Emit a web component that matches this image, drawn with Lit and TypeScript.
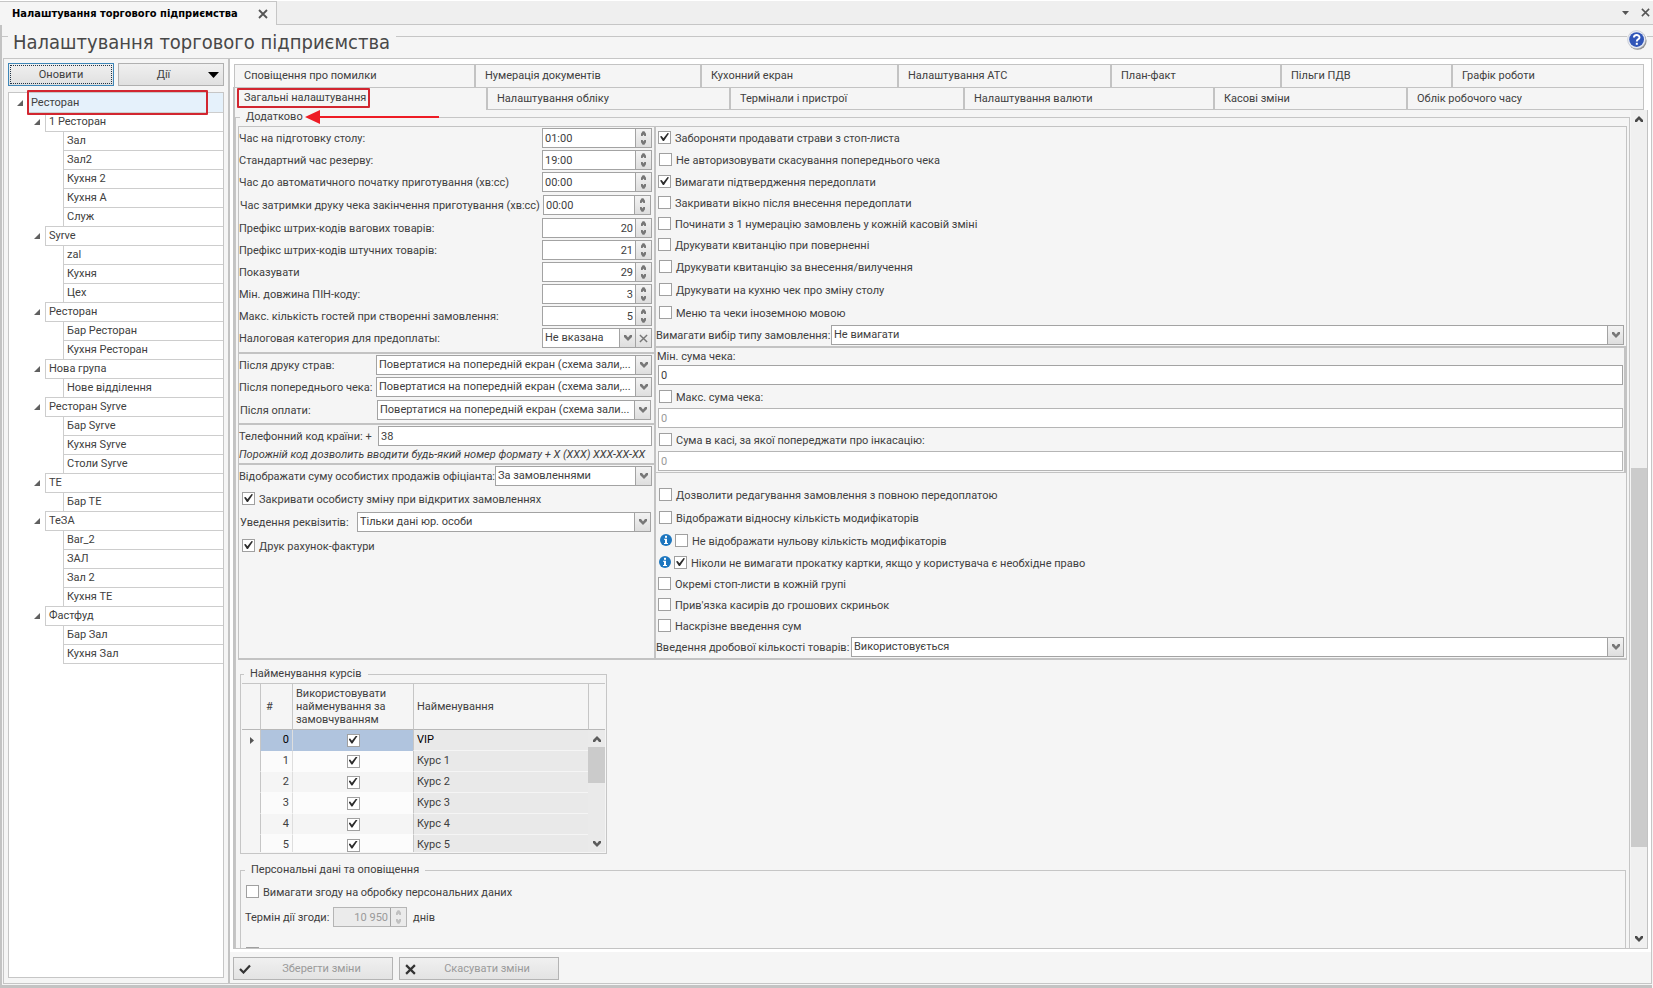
import { LitElement, html, css, svg, nothing } from "lit";
import { customElement, property } from "lit/decorators.js";
import { classMap } from "lit/directives/class-map.js";
import { styleMap } from "lit/directives/style-map.js";

const chevronDown = svg`<svg class="chev" viewBox="0 0 8 6" width="8" height="6"><path d="M0 0h2l2 2.4L6 0h2v2L4 6 0 2z" fill="currentColor"/></svg>`;
const chevronUp = svg`<svg class="chev" viewBox="0 0 8 6" width="8" height="6"><path d="M0 6h2l2-2.4L6 6h2V4L4 0 0 4z" fill="currentColor"/></svg>`;
const miniUp = svg`<svg viewBox="0 0 5 5" width="5" height="5"><path d="M0 5h1.6l.9-1.6.9 1.6H5V2.8L3.4.2H1.6L0 2.8z" fill="currentColor"/></svg>`;
const miniDown = svg`<svg viewBox="0 0 5 5" width="5" height="5"><path d="M0 0h1.6l.9 1.6L3.4 0H5v2.2L3.4 4.8H1.6L0 2.2z" fill="currentColor"/></svg>`;
const cross = (size: number, w: number) => svg`<svg viewBox="0 0 10 10" width=${size} height=${size}><path d="M1 1l8 8M9 1l-8 8" stroke="currentColor" stroke-width=${w} fill="none"/></svg>`;
const infoIcon = svg`<svg viewBox="0 0 12 12" width="12" height="12" aria-hidden="true"><circle cx="6" cy="6" r="6" fill="#1c76bf"/><rect x="5" y="1.8" width="2" height="2" fill="#fff"/><path d="M4 4.8h3V9h1v1H4V9h1V5.8H4z" fill="#fff"/></svg>`;

const base = css`
  * { box-sizing: border-box; }
  button, input, select { font: inherit; color: inherit; margin: 0; border-radius: 0; }
  button { padding: 0; }
  svg { display: block; }
  .check {
    appearance: none; flex: none; width: 13px; height: 13px;
    border: 1px solid #a0a0a0; background: #fff;
  }
  .check:checked::after {
    content: ""; display: block; width: 9px; height: 8px; margin: 1px;
    background: #2d2d2d;
    clip-path: polygon(0 45%, 18% 38%, 38% 66%, 84% 0, 100% 6%, 44% 100%, 32% 100%);
  }
`;

@customElement("tick-row")
class TickRow extends LitElement {
  @property() text = "";
  @property({ type: Boolean }) on = false;
  @property({ type: Boolean }) inset = false;
  @property({ type: Boolean }) info = false;
  static styles = [base, css`
    :host { display: block; }
    .row { display: flex; align-items: center; gap: 3px; height: 21px; padding-left: 2px; }
    .row.inset { height: 23px; padding-left: 3px; }
    .row > svg { flex: none; margin: 0 0 2px 1px; }
    label { padding: 2px 0 0 1px; white-space: nowrap; }
  `];
  render() {
    return html`<div class=${classMap({ row: true, inset: this.inset })}>
      ${this.info ? infoIcon : nothing}
      <input class="check" type="checkbox" id="c" .checked=${this.on}><label for="c">${this.text}</label>
    </div>`;
  }
}

@customElement("field-row")
class FieldRow extends LitElement {
  @property() text = "";
  @property() value = "";
  @property() kind: "text" | "time" | "number" | "select" | "clearable" = "text";
  @property({ type: Number }) lead = 0;
  @property({ type: Boolean }) inset = false;
  @property({ type: Boolean }) off = false;
  @property() unit = "";
  static styles = [base, css`
    :host { display: block; }
    .row { display: flex; padding: 1px 2px 1px 0; height: 22px; align-items: center; }
    .row.inset { padding: 2px 3px 2px 1px; height: 24px; }
    label { flex: none; padding-top: 2px; white-space: nowrap; }
    .box { flex: 1; min-width: 0; height: 20px; display: flex; border: 1px solid #a3a3a3; background: #fff; }
    .entry {
      flex: 1; min-width: 0; width: 0; height: 18px; border: 0; padding: 0 2px; background: none;
      appearance: none; outline: 0;
    }
    .number { text-align: right; }
    .side {
      flex: none; width: 16px; border: 0; border-left: 1px solid #a3a3a3; color: #777;
      background: linear-gradient(#f3f3f3, #dedede); display: flex; flex-direction: column;
      align-items: center; justify-content: center;
    }
    .spin { flex: 1; width: 100%; border: 0; background: none; color: inherit; display: grid; place-items: center; }
    .off .box { border-color: #b5b5b5; }
    .off .entry { color: #9a9a9a; }
    .compact .box { flex: none; width: 74px; background: #ebebeb; }
    .compact .side { background: #ebebeb; color: #c0c0c0; }
    .unit { padding: 2px 0 0 6px; }
  `];
  render() {
    const k = this.kind;
    const isSelect = k === "select" || k === "clearable";
    const isSpin = k === "time" || k === "number";
    return html`<div class=${classMap({ row: true, inset: this.inset, off: this.off, compact: !!this.unit })}>
      ${this.text ? html`<label for="f" style=${styleMap({ width: this.lead ? this.lead + "px" : "auto" })}>${this.text}</label>` : nothing}
      <div class="box">
        ${isSelect
          ? html`<select class="entry" id="f"><option>${this.value}</option></select><span class="side">${chevronDown}</span>`
          : html`<input class=${classMap({ entry: true, number: k === "number" })} id="f" .value=${this.value} ?disabled=${this.off} aria-label=${this.text || "Сума"}>`}
        ${isSpin ? html`<span class="side">
          <button class="spin" aria-label="Більше" ?disabled=${this.off}>${miniUp}</button>
          <button class="spin" aria-label="Менше" ?disabled=${this.off}>${miniDown}</button>
        </span>` : nothing}
        ${k === "clearable" ? html`<button class="side" aria-label="Очистити">${cross(9, 1.6)}</button>` : nothing}
      </div>
      ${this.unit ? html`<span class="unit">${this.unit}</span>` : nothing}
    </div>`;
  }
}

type Node = [level: number, name: string];
const tree: Node[] = [
  [0, "Ресторан"], [1, "1 Ресторан"], [2, "Зал"], [2, "Зал2"], [2, "Кухня 2"], [2, "Кухня А"], [2, "Служ"],
  [1, "Syrve"], [2, "zal"], [2, "Кухня"], [2, "Цех"],
  [1, "Ресторан"], [2, "Бар Ресторан"], [2, "Кухня Ресторан"],
  [1, "Нова група"], [2, "Нове відділення"],
  [1, "Ресторан Syrve"], [2, "Бар Syrve"], [2, "Кухня Syrve"], [2, "Столи Syrve"],
  [1, "ТЕ"], [2, "Бар ТЕ"],
  [1, "ТеЗА"], [2, "Bar_2"], [2, "ЗАЛ"], [2, "Зал 2"], [2, "Кухня ТЕ"],
  [1, "Фастфуд"], [2, "Бар Зал"], [2, "Кухня Зал"],
];

const upperTabs: [string, number][] = [
  ["Сповіщення про помилки", 240], ["Нумерація документів", 226], ["Кухонний екран", 197],
  ["Налаштування АТС", 213], ["План-факт", 170], ["Пільги ПДВ", 171], ["Графік роботи", 193],
];
const lowerTabs: [string, number][] = [
  ["Загальні налаштування", 253], ["Налаштування обліку", 243], ["Термінали і пристрої", 234],
  ["Налаштування валюти", 250], ["Касові зміни", 193], ["Облік робочого часу", 238],
];
const columns = (tabs: [string, number][]) => ({ gridTemplateColumns: tabs.map(([, n]) => n + "fr").join(" ") });

@customElement("app-root")
class AppRoot extends LitElement {
  static styles = [base, css`
    :host {
      display: flex; flex-direction: column; height: 100vh; overflow: hidden;
      background: #f5f5f5; color: #404040; font: 11px/14px Roboto, "Liberation Sans", sans-serif;
    }
    .strip { flex: none; display: flex; height: 25px; padding-top: 1px; background: #fff; }
    .doc {
      display: flex; align-items: center; gap: 14px; width: 277px; padding-left: 12px;
      border: 1px solid #c6c6c6; border-width: 1px 1px 0 0; background: #f5f5f5;
      font: bold 11px/22px "DejaVu Sans Condensed", "DejaVu Sans", sans-serif; color: #000; white-space: nowrap;
    }
    .plain { border: 0; background: none; color: #555; display: grid; place-items: center; }
    .doc .plain { margin-left: auto; margin-right: 8px; }
    .strip-rest {
      flex: 1; display: flex; justify-content: flex-end; align-items: center; gap: 12px;
      padding-right: 3px; background: #efefef; border-bottom: 1px solid #c6c6c6;
    }
    .head { flex: none; display: flex; height: 33px; border-left: 2px solid #c3c3c3; }
    .rule { flex: none; width: 6px; height: 1px; margin-top: 11px; background: #c6c6c6; }
    .rule.long { flex: 1; width: auto; }
    h1 {
      margin: 0; padding: 1px 6px 0 5px; font: 20px/33px "DejaVu Sans Condensed", "DejaVu Sans", sans-serif;
      white-space: nowrap; color: #484848;
    }
    .help { border: 0; background: none; margin-top: 5px; height: 20px; }

    .frame {
      flex: 1; min-height: 0; display: flex; margin: 0 1px 0 0; border-left: 2px solid #c3c3c3;
      padding-left: 1px; border-bottom: 3px solid #c3c3c3;
    }
    .work { flex: 1; min-width: 0; display: flex; border: 1px solid #c6c6c6; margin-bottom: 1px; }
    .nav { flex: none; width: 226px; display: flex; flex-direction: column; padding: 4px 4px 5px 4px; border-right: 2px solid #c3c3c3; }
    .pair { display: flex; gap: 4px; margin-bottom: 6px; }
    .btn {
      flex: 1; height: 23px; border: 1px solid #b0b0b0; background: linear-gradient(#f0f0f0, #e0e0e0);
      display: flex; align-items: center; justify-content: center; padding-top: 1px;
    }
    .btn.focus { border-color: #3f87b8; outline: 1px dotted #234; outline-offset: -3px; }
    .btn .grow { flex: 1; text-align: center; }
    .btn svg { margin-right: 4px; }
    .tree { flex: 1; min-height: 0; margin: 0; padding: 0; list-style: none; background: #fff; border: 1px solid #c6c6c6; }
    .node { position: relative; display: flex; height: 20px; margin-bottom: -1px; }
    .twist { flex: none; width: 19px; display: flex; justify-content: flex-end; align-items: center; padding-right: 5px; }
    .level1 .twist { width: 36px; }
    .level2 .twist { width: 54px; }
    .name { flex: 1; border: 1px solid #cdcdcd; border-right: 0; padding: 0 3px; line-height: 18px; }
    .level0 .name { background: #e5f1fb; border-width: 0 0 1px; line-height: 20px; }
    .mark { position: absolute; border: 2px solid #d22630; pointer-events: none; border-radius: 1px; }
    .node .mark { left: 18px; right: 15px; top: -3px; height: 25px; z-index: 1; }

    .main { flex: 1; min-width: 0; display: flex; flex-direction: column; }
    .stage { flex: 1; min-height: 0; display: flex; flex-direction: column; padding: 5px 3px 3px; background: #fff; }
    .tabs { flex: none; display: grid; margin: 0 4px 0 1px; position: relative; }
    .tab {
      height: 23px; border: 1px solid #c3c3c3; border-width: 1px 0 0 2px; background: #f5f5f5;
      text-align: left; padding-left: 9px; position: relative;
    }
    .tab:first-child { border-left-width: 1px; }
    .tab:last-child { border-right-width: 1px; }
    .lower { margin-left: 0; }
    .lower .tab { border-bottom-width: 1px; }
    .lower .active { border-bottom: 0; border-left: 2px solid #c3c3c3; padding-bottom: 3px; }
    .active .mark { left: 2px; top: 0; width: 133px; height: 20px; }
    .page {
      flex: 1; min-height: 0; display: flex; overflow: hidden; border: 1px solid #c3c3c3;
      border-top: 0; border-left-width: 2px; background: #f5f5f5;
    }
    .content { flex: 1; min-width: 0; }
    fieldset { margin: 0; min-width: 0; border: 1px solid #c6c6c6; padding: 2px 2px 20px 2px; }
    legend { padding: 0 6px; margin-left: 2px; height: 14px; position: relative; }
    .arrow { position: absolute; left: 65px; top: 0; }
    .grid { display: grid; grid-template-columns: 417px minmax(0, 1fr); border: 1px solid #c3c3c3; border-bottom-width: 2px; }
    .left { border-right: 2px solid #c3c3c3; }
    .part { border-bottom: 2px solid #c3c3c3; padding-bottom: 1px; }
    .part.first { padding-bottom: 3px; }
    .part:last-child { border: 0; }
    .hint { font-style: italic; height: 15px; line-height: 16px; white-space: nowrap; overflow: hidden; }
    .right .sums { border: 1px solid #c3c3c3; border-top-width: 2px; border-right-width: 2px; border-left: 0; }
    .sums .cap { height: 16px; line-height: 18px; padding-left: 1px; display: block; }
    .sums field-row { padding-left: 2px; margin-right: -1px; }
    .sums tick-row { padding-left: 1px; }
    .later { padding-top: 10px; }

    .courses { width: 367px; margin: 7px 0 0 2px; padding: 2px 1px 1px 1px; }
    .window { display: flex; height: 169px; overflow: hidden; border-top: 1px solid #c6c6c6; }
    table { flex: 1; border-collapse: separate; border-spacing: 0; table-layout: fixed; }
    th { height: 46px; font-weight: normal; text-align: left; line-height: 13px; padding: 0 3px; border-bottom: 1px solid #b8b8b8; border-left: 1px solid #c6c6c6; }
    th:first-child, td:first-child { border-left: 0; width: 18px; }
    th.num { width: 32px; padding-left: 5px; }
    th.use { width: 121px; }
    td { height: 21px; padding: 0 3px; border-left: 1px solid #c6c6c6; border-bottom: 1px solid #f5f5f5; }
    td:first-child { padding: 0 0 0 8px; }
    td.num { text-align: right; background: #fbfbfb; border-bottom-color: #fbfbfb; }
    td.use { background: #fcfcfc; border-color: #fcfcfc; border-left-color: #dedede; }
    td.use .check { display: block; margin: 0 auto; }
    tr:nth-child(odd) td.num, tr:nth-child(odd) td.use { background: #f5f5f5; }
    td.title { background: #e9e9e9; }
    tr.current td { color: #000; }
    tbody tr.current td.num, tbody tr.current td.use { background: #b0c4de; border-bottom-color: #b0c4de; }
    .rail { flex: none; width: 17px; display: flex; flex-direction: column; }
    .rail .corner { height: 46px; border-left: 1px solid #c6c6c6; border-bottom: 1px solid #b8b8b8; }
    .bar { flex: 1; display: flex; flex-direction: column; background: #eaeaea; color: #5c5c5c; }
    .bar button { height: 17px; border: 0; background: none; display: grid; place-items: center; }
    .thumb { height: 36px; background: #cbcbcb; }
    .space { flex: 1; }

    .personal { margin: 9px 1px 0 2px; padding: 4px 4px 20px; }
    .personal legend { margin-left: 0; }
    .personal tick-row { margin-left: -1px; }
    .personal field-row { margin: 4px 0 15px; }
    .scroll { flex: none; width: 16px; margin: 0 0 0 1px; display: flex; flex-direction: column; background: #f0f0f0; color: #4a4a4a; }
    .scroll button { height: 18px; border: 0; background: none; display: grid; place-items: center; }
    .before { flex: 340; }
    .grip { flex: 380; background: #cbcbcb; }
    .after { flex: 83; }

    .foot { flex: none; display: flex; gap: 6px; padding: 5px 3px 3px; }
    .foot .btn { flex: none; width: 160px; color: #9a9a9a; border-color: #b4b4b4; background: linear-gradient(#f0f0f0, #e3e3e3); }
    .foot svg { margin: 0 0 0 5px; color: #333; }
  `];

  private tabRow(tabs: [string, number][], lower: boolean) {
    return html`<div class=${classMap({ tabs: true, lower })} style=${styleMap(columns(tabs))}>
      ${tabs.map(([name], i) => html`<button class=${classMap({ tab: true, active: lower && i === 0 })}>${name}${lower && i === 0 ? html`<span class="mark"></span>` : nothing}</button>`)}
    </div>`;
  }

  private nav() {
    return html`<nav class="nav">
      <div class="pair">
        <button class="btn focus">Оновити</button>
        <button class="btn"><span class="grow">Дії</span>
          <svg viewBox="0 0 11 6" width="11" height="6"><path d="M0 0h11L5.5 6z" fill="#000"/></svg></button>
      </div>
      <ul class="tree">${tree.map(([level, name]) => html`<li class="node level${level}">
        <span class="twist">${level < 2 ? svg`<svg viewBox="0 0 6 6" width="6" height="6"><path d="M6 0v6H0z" fill="#606060"/></svg>` : nothing}</span>
        <span class="name">${name}</span>${level === 0 ? html`<span class="mark"></span>` : nothing}</li>`)}</ul>
    </nav>`;
  }

  private leftColumn() {
    const back = "Повертатися на попередній екран (схема зали";
    return html`<div class="left">
      <div class="part first">
        <field-row kind="time" lead="303" text="Час на підготовку столу:" value="01:00"></field-row>
        <field-row kind="time" lead="303" text="Стандартний час резерву:" value="19:00"></field-row>
        <field-row kind="time" lead="303" text="Час до автоматичного початку приготування (хв:сс)" value="00:00"></field-row>
        <field-row kind="time" lead="303" inset text="Час затримки друку чека закінчення приготування (хв:сс)" value="00:00"></field-row>
        <field-row kind="number" lead="303" text="Префікс штрих-кодів вагових товарів:" value="20"></field-row>
        <field-row kind="number" lead="303" text="Префікс штрих-кодів штучних товарів:" value="21"></field-row>
        <field-row kind="number" lead="303" text="Показувати" value="29"></field-row>
        <field-row kind="number" lead="303" text="Мін. довжина ПІН-коду:" value="3"></field-row>
        <field-row kind="number" lead="303" text="Макс. кількість гостей при створенні замовлення:" value="5"></field-row>
        <field-row kind="clearable" lead="303" text="Налоговая категория для предоплаты:" value="Не вказана"></field-row>
      </div>
      <div class="part">
        <field-row kind="select" lead="137" text="Після друку страв:" value=${back + ",..."}></field-row>
        <field-row kind="select" lead="137" text="Після попереднього чека:" value=${back + ",..."}></field-row>
        <field-row kind="select" lead="137" inset text="Після оплати:" value=${back + "..."}></field-row>
      </div>
      <div class="part">
        <field-row lead="139" text="Телефонний код країни: +" value="38"></field-row>
        <div class="hint">Порожній код дозволить вводити будь-який номер формату + X (XXX) XXX-XX-XX</div>
      </div>
      <div class="part">
        <field-row kind="select" lead="256" text="Відображати суму особистих продажів офіціанта:" value="За замовленнями"></field-row>
        <tick-row inset on text="Закривати особисту зміну при відкритих замовленнях"></tick-row>
        <field-row kind="select" lead="117" inset text="Уведення реквізитів:" value="Тільки дані юр. особи"></field-row>
        <tick-row inset on text="Друк рахунок-фактури"></tick-row>
      </div>
    </div>`;
  }

  private rightColumn() {
    return html`<div class="right">
      <tick-row on text="Забороняти продавати страви з стоп-листа"></tick-row>
      <tick-row inset text="Не авторизовувати скасування попереднього чека"></tick-row>
      <tick-row on text="Вимагати підтвердження передоплати"></tick-row>
      <tick-row text="Закривати вікно після внесення передоплати"></tick-row>
      <tick-row text="Починати з 1 нумерацію замовлень у кожній касовій зміні"></tick-row>
      <tick-row text="Друкувати квитанцію при поверненні"></tick-row>
      <tick-row inset text="Друкувати квитанцію за внесення/вилучення"></tick-row>
      <tick-row inset text="Друкувати на кухню чек про зміну столу"></tick-row>
      <tick-row inset text="Меню та чеки іноземною мовою"></tick-row>
      <field-row kind="select" lead="175" text="Вимагати вибір типу замовлення:" value="Не вимагати"></field-row>
      <div class="sums">
        <span class="cap">Мін. сума чека:</span>
        <field-row value="0"></field-row>
        <tick-row text="Макс. сума чека:"></tick-row>
        <field-row off value="0"></field-row>
        <tick-row text="Сума в касі, за якої попереджати про інкасацію:"></tick-row>
        <field-row off value="0"></field-row>
      </div>
      <div class="later">
        <tick-row inset text="Дозволити редагування замовлення з повною передоплатою"></tick-row>
        <tick-row inset text="Відображати відносну кількість модифікаторів"></tick-row>
        <tick-row inset info text="Не відображати нульову кількість модифікаторів"></tick-row>
        <tick-row info on text="Ніколи не вимагати прокатку картки, якщо у користувача є необхідне право"></tick-row>
        <tick-row text="Окремі стоп-листи в кожній групі"></tick-row>
        <tick-row text="Прив'язка касирів до грошових скриньок"></tick-row>
        <tick-row text="Наскрізне введення сум"></tick-row>
        <field-row kind="select" lead="195" text="Введення дробової кількості товарів:" value="Використовується"></field-row>
      </div>
    </div>`;
  }

  private courses() {
    const names = ["VIP", "Курс 1", "Курс 2", "Курс 3", "Курс 4", "Курс 5"];
    return html`<fieldset class="courses"><legend>Найменування курсів</legend>
      <div class="window">
        <table>
          <thead><tr><th></th><th class="num">#</th><th class="use">Використовувати найменування за замовчуванням</th><th>Найменування</th></tr></thead>
          <tbody>${names.map((n, i) => html`<tr class=${classMap({ current: i === 0 })}>
            <td>${i === 0 ? svg`<svg viewBox="0 0 4 7" width="4" height="7"><path d="M0 0l4 3.5L0 7z" fill="#555"/></svg>` : nothing}</td>
            <td class="num">${i}</td>
            <td class="use"><input class="check" type="checkbox" .checked=${true} aria-label=${n}></td>
            <td class="title">${n}</td></tr>`)}</tbody>
        </table>
        <div class="rail"><div class="corner"></div>
          <div class="bar"><button aria-label="Вгору">${chevronUp}</button><div class="thumb"></div><div class="space"></div><button aria-label="Вниз">${chevronDown}</button></div>
        </div>
      </div>
    </fieldset>`;
  }

  render() {
    return html`
      <div class="strip">
        <div class="doc">Налаштування торгового підприємства<button class="plain" aria-label="Закрити вкладку">${cross(10, 1.8)}</button></div>
        <div class="strip-rest">
          <button class="plain" aria-label="Список вкладок"><svg viewBox="0 0 7 4" width="7" height="4"><path d="M0 0h7L3.5 4z" fill="#555"/></svg></button>
          <button class="plain" aria-label="Закрити">${cross(9, 1.7)}</button>
        </div>
      </div>
      <header class="head">
        <span class="rule"></span><h1>Налаштування торгового підприємства</h1><span class="rule long"></span>
        <button class="help" aria-label="Довідка"><svg viewBox="0 0 20 20" width="20" height="20">
          <circle cx="10.6" cy="10.8" r="9" fill="#8f8f8f"/><circle cx="9.6" cy="9.6" r="9" fill="#e8ecf4" stroke="#b8bcc8" stroke-width=".6"/>
          <circle cx="9.6" cy="9.6" r="7.4" fill="#3156b8"/>
          <path d="M6.9 7.6c0-3.4 5.6-3.3 5.6-.2 0 1.900-2.700 2-2.700 4" stroke="#fff" stroke-width="1.900" fill="none"/><rect x="8.800" y="12.800" width="2" height="2" fill="#fff"/>
        </svg></button><span class="rule"></span>
      </header>
      <div class="frame"><div class="work">
        ${this.nav()}
        <main class="main">
          <div class="stage">
            ${this.tabRow(upperTabs, false)}${this.tabRow(lowerTabs, true)}
            <div class="page">
              <div class="content">
                <fieldset>
                  <legend>Додатково<svg class="arrow" viewBox="0 0 135 14" width="135" height="14"><path d="M0 7L15 0v6h119v2H15v6z" fill="#ee1c25"/></svg></legend>
                  <div class="grid">${this.leftColumn()}${this.rightColumn()}</div>
                  ${this.courses()}
                  <fieldset class="personal"><legend>Персональні дані та оповіщення</legend>
                    <tick-row text="Вимагати згоду на обробку персональних даних"></tick-row>
                    <field-row kind="number" off lead="88" unit="днів" text="Термін дії згоди:" value="10 950"></field-row>
                    <tick-row text=""></tick-row>
                  </fieldset>
                </fieldset>
              </div>
              <div class="scroll">
                <button aria-label="Вгору">${chevronUp}</button>
                <div class="before"></div><div class="grip"></div><div class="after"></div>
                <button aria-label="Вниз">${chevronDown}</button>
              </div>
            </div>
          </div>
          <div class="foot">
            <button class="btn"><svg viewBox="0 0 12 10" width="12" height="10"><path d="M1 5l3.500 3.500L11 1.500" stroke="currentColor" stroke-width="2.200" fill="none"/></svg><span class="grow">Зберегти зміни</span></button>
            <button class="btn">${cross(11, 2)}<span class="grow">Скасувати зміни</span></button>
          </div>
        </main>
      </div></div>`;
  }
}
